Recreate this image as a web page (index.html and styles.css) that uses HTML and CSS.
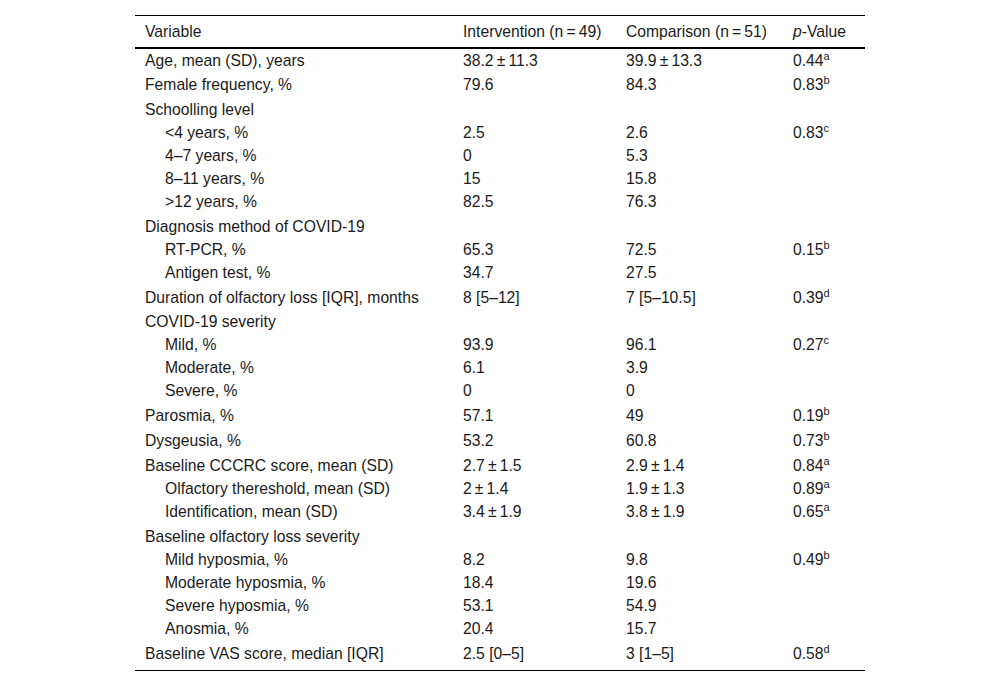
FILE: index.html
```html
<!DOCTYPE html>
<html lang="en">
<head>
<meta charset="utf-8">
<link rel="stylesheet" href="styles.css">
</head>
<body>
<div class="wrap">
<table class="tbl">
<colgroup>
<col class="c1"><col class="c2"><col class="c3"><col class="c4">
</colgroup>
<thead>
<tr><th>Variable</th><th>Intervention (n&#8201;=&#8201;49)</th><th>Comparison (n&#8201;=&#8201;51)</th><th><i>p</i>-Value</th></tr>
</thead>
<tbody>
<tr class="top first"><td>Age, mean (SD), years</td><td>38.2&#8201;±&#8201;11.3</td><td>39.9&#8201;±&#8201;13.3</td><td>0.44<sup>a</sup></td></tr>
<tr class="top"><td>Female frequency, %</td><td>79.6</td><td>84.3</td><td>0.83<sup>b</sup></td></tr>
<tr class="top"><td>Schoolling level</td><td></td><td></td><td></td></tr>
<tr class="sub"><td>&lt;4 years, %</td><td>2.5</td><td>2.6</td><td>0.83<sup>c</sup></td></tr>
<tr class="sub"><td>4–7 years, %</td><td>0</td><td>5.3</td><td></td></tr>
<tr class="sub"><td>8–11 years, %</td><td>15</td><td>15.8</td><td></td></tr>
<tr class="sub"><td>&gt;12 years, %</td><td>82.5</td><td>76.3</td><td></td></tr>
<tr class="top"><td>Diagnosis method of COVID-19</td><td></td><td></td><td></td></tr>
<tr class="sub"><td>RT-PCR, %</td><td>65.3</td><td>72.5</td><td>0.15<sup>b</sup></td></tr>
<tr class="sub"><td>Antigen test, %</td><td>34.7</td><td>27.5</td><td></td></tr>
<tr class="top"><td>Duration of olfactory loss [IQR], months</td><td>8 [5–12]</td><td>7 [5–10.5]</td><td>0.39<sup>d</sup></td></tr>
<tr class="top"><td>COVID-19 severity</td><td></td><td></td><td></td></tr>
<tr class="sub"><td>Mild, %</td><td>93.9</td><td>96.1</td><td>0.27<sup>c</sup></td></tr>
<tr class="sub"><td>Moderate, %</td><td>6.1</td><td>3.9</td><td></td></tr>
<tr class="sub"><td>Severe, %</td><td>0</td><td>0</td><td></td></tr>
<tr class="top"><td>Parosmia, %</td><td>57.1</td><td>49</td><td>0.19<sup>b</sup></td></tr>
<tr class="top"><td>Dysgeusia, %</td><td>53.2</td><td>60.8</td><td>0.73<sup>b</sup></td></tr>
<tr class="top"><td>Baseline CCCRC score, mean (SD)</td><td>2.7&#8201;±&#8201;1.5</td><td>2.9&#8201;±&#8201;1.4</td><td>0.84<sup>a</sup></td></tr>
<tr class="sub"><td>Olfactory thereshold, mean (SD)</td><td>2&#8201;±&#8201;1.4</td><td>1.9&#8201;±&#8201;1.3</td><td>0.89<sup>a</sup></td></tr>
<tr class="sub"><td>Identification, mean (SD)</td><td>3.4&#8201;±&#8201;1.9</td><td>3.8&#8201;±&#8201;1.9</td><td>0.65<sup>a</sup></td></tr>
<tr class="top"><td>Baseline olfactory loss severity</td><td></td><td></td><td></td></tr>
<tr class="sub"><td>Mild hyposmia, %</td><td>8.2</td><td>9.8</td><td>0.49<sup>b</sup></td></tr>
<tr class="sub"><td>Moderate hyposmia, %</td><td>18.4</td><td>19.6</td><td></td></tr>
<tr class="sub"><td>Severe hyposmia, %</td><td>53.1</td><td>54.9</td><td></td></tr>
<tr class="sub"><td>Anosmia, %</td><td>20.4</td><td>15.7</td><td></td></tr>
<tr class="top last"><td>Baseline VAS score, median [IQR]</td><td>2.5 [0–5]</td><td>3 [1–5]</td><td>0.58<sup>d</sup></td></tr>
</tbody>
</table>
</div>
</body>
</html>
```

FILE: styles.css
```css
html, body {
  margin: 0;
  padding: 0;
  background: #ffffff;
}
body {
  font-family: "Liberation Sans", Arial, sans-serif;
  font-size: 15.7px;
  color: #1a1a1a;
}
.wrap {
  padding-top: 15px;
  display: flex;
  justify-content: center;
}
.tbl {
  width: 730px;
  border-collapse: collapse;
  table-layout: fixed;
  border-top: 1px solid #000;
  border-bottom: 1.5px solid #000;
}
.c1 { width: 318px; }
.c2 { width: 163px; }
.c3 { width: 167px; }
.c4 { width: 82px; }
th {
  font-weight: normal;
  text-align: left;
  padding: 1px 0 0 10px;
  height: 30px;
  line-height: 18px;
  vertical-align: middle;
  border-bottom: 2px solid #000;
}
td {
  padding: 0 0 0 10px;
  line-height: 18px;
  vertical-align: middle;
  white-space: nowrap;
  box-sizing: border-box;
}
tr.sub td { height: 23px; }
tr.top td { height: 24.8px; padding-top: 1.8px; }
tr.first td { height: 24px; padding-top: 0; }
tr.last td { height: 30px; padding-top: 0; padding-bottom: 2px; }
tr.sub td:first-child { padding-left: 30px; }
sup {
  font-size: 11px;
  line-height: 0;
  vertical-align: 6px;
}
```
